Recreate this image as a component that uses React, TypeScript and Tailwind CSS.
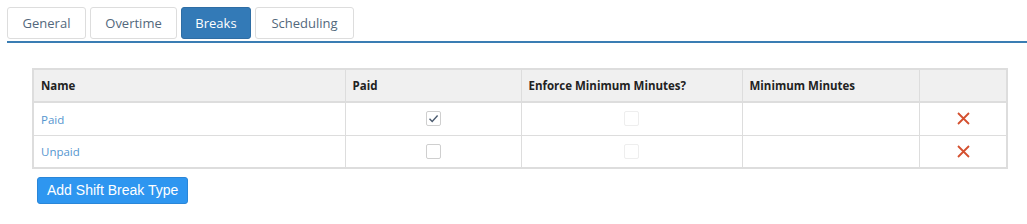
import React from "react";

const font = { fontFamily: '"Segoe UI", "Open Sans", "Noto Sans", sans-serif' };

function Check({ checked, faded }: { checked?: boolean; faded?: boolean }) {
  return (
    <div
      className={`w-[15px] h-[15px] rounded-[2px] border ${
        faded ? "border-[#eeeeee]" : "border-[#cfcfcf]"
      } bg-white flex items-center justify-center`}
    >
      {checked && (
        <svg width="13" height="13" viewBox="0 0 13 13">
          <path d="M2.5 6.8 L5.2 9.4 L10.6 3.6" fill="none" stroke="#4a5a6e" strokeWidth="1.4" />
        </svg>
      )}
    </div>
  );
}

function XIcon() {
  return (
    <svg width="13" height="13" viewBox="0 0 13 13">
      <path d="M1 1 L12 12 M12 1 L1 12" stroke="#d4502f" strokeWidth="1.8" />
    </svg>
  );
}

export default function App() {
  const tabs = ["General", "Overtime", "Breaks", "Scheduling"];
  const widths = ["w-[79px]", "w-[87px]", "w-[70px]", "w-[99px]"];
  const rows = ["Paid", "Unpaid"];
  return (
    <div className="w-[1027px] h-[224px] bg-white text-[13px]" style={font}>
      <div className="pt-[7px] pl-[7px]">
        <div className="flex gap-[4px]">
          {tabs.map((t, i) => (
            <div
              key={t}
              className={`${widths[i]} h-[32px] pt-[1px] flex items-center justify-center rounded-[3px] border ${
                t === "Breaks"
                  ? "bg-[#337ab7] border-[#2e6da4] text-white"
                  : "bg-white border-[#dddddd] text-[#53687c]"
              }`}
            >
              {t}
            </div>
          ))}
        </div>
        <div className="mt-[2px] h-[2px] bg-[#3a7db3]" />
      </div>
      <div className="pl-[32px] pt-[25px] w-[1008px]">
        <table className="w-[976px] border-collapse border-2 border-[#dddddd] text-[11.5px] table-fixed">
          <colgroup>
            <col className="w-[312px]" />
            <col className="w-[176px]" />
            <col className="w-[221px]" />
            <col className="w-[177px]" />
            <col />
          </colgroup>
          <thead>
            <tr className="bg-[#f0f0f0] h-[33px]">
              {["Name", "Paid", "Enforce Minimum Minutes?", "Minimum Minutes", ""].map((h, i) => (
                <th
                  key={i}
                  className="border border-[#dddddd] border-b-2 text-left font-bold text-[#222] px-[7px] py-0"
                >
                  {h}
                </th>
              ))}
            </tr>
          </thead>
          <tbody>
            {rows.map((r, i) => (
              <tr key={r} className="h-[33px]">
                <td className="border border-[#dddddd] px-[7px] pt-[1px] text-[#5596cf]">{r}</td>
                <td className="border border-[#dddddd]">
                  <div className="flex justify-center">
                    <Check checked={i === 0} />
                  </div>
                </td>
                <td className="border border-[#dddddd]">
                  <div className="flex justify-center">
                    <Check faded />
                  </div>
                </td>
                <td className="border border-[#dddddd]" />
                <td className="border border-[#dddddd]">
                  <div className="flex justify-center pl-[2px]">
                    <XIcon />
                  </div>
                </td>
              </tr>
            ))}
          </tbody>
        </table>
        <div className="pt-[8px] pl-[5px]">
          <button
            className="h-[27px] px-[9px] bg-[#2e96f0] border border-[#2a86d8] rounded-[3px] text-white text-[14px]"
            style={{ fontFamily: '"Liberation Sans", Arial, sans-serif' }}
          >
            Add Shift Break Type
          </button>
        </div>
      </div>
    </div>
  );
}
